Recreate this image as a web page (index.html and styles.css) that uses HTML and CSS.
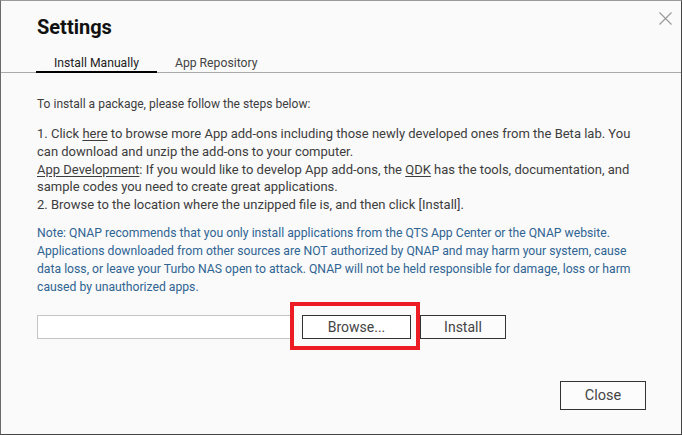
FILE: index.html
```html
<!DOCTYPE html>
<html>
<head>
<meta charset="utf-8">
<link rel="stylesheet" href="styles.css">
</head>
<body>
<div class="dialog">
  <div class="header">
    <h1 class="title">Settings</h1>
    <button class="close-x" aria-label="Close">
      <svg width="13" height="13" viewBox="0 0 13 13"><path d="M0.5 0.5L12.5 12.5M12.5 0.5L0.5 12.5" stroke="#9a9a9a" stroke-width="1.2" fill="none"/></svg>
    </button>
  </div>
  <div class="tabs">
    <div class="tab active">Install Manually</div>
    <div class="tab">App Repository</div>
  </div>
  <div class="content">
    <p class="intro">To install a package, please follow the steps below:</p>
    <p class="steps">1. Click <u>here</u> to browse more App add-ons including those newly developed ones from the Beta lab. You can download and unzip the add-ons to your computer.<br><u>App Development</u>: If you would like to develop App add-ons, the <u>QDK</u> has the tools, documentation, and sample codes you need to create great applications.<br>2. Browse to the location where the unzipped file is, and then click [Install].</p>
    <p class="note">Note: QNAP recommends that you only install applications from the QTS App Center or the QNAP website. Applications downloaded from other sources are NOT authorized by QNAP and may harm your system, cause data loss, or leave your Turbo NAS open to attack. QNAP will not be held responsible for damage, loss or harm caused by unauthorized apps.</p>
    <div class="file-row">
      <div class="file-input"></div>
      <div class="browse-wrap">
        <button class="btn browse">Browse...</button>
        <div class="highlight"></div>
      </div>
      <button class="btn install">Install</button>
    </div>
  </div>
  <div class="footer">
    <button class="btn close">Close</button>
  </div>
</div>
</body>
</html>
```

FILE: styles.css
```css
* { box-sizing: border-box; }
html, body { margin: 0; padding: 0; }
body {
  font-family: Roboto, "Liberation Sans", sans-serif;
  background: #fafafa;
}
.dialog {
  position: relative;
  width: 682px;
  height: 435px;
  background: #fafafa;
  border: 1px solid #444;
  border-top-color: #9a9a9a;
  border-left-color: #6a6a6a;
  display: flex;
  flex-direction: column;
}
.header {
  padding: 14px 36px 0;
}
.title {
  margin: 0;
  font-size: 20px;
  line-height: 24px;
  font-weight: 700;
  color: #111;
}
.close-x {
  position: absolute;
  top: 11px;
  right: 9px;
  width: 13px;
  height: 13px;
  padding: 0;
  border: 0;
  background: none;
  display: block;
}
.close-x svg { display: block; }
.tabs {
  margin-top: 17px;
  padding: 0 35px;
  display: flex;
  border-bottom: 1px solid #aaa;
}
.tab {
  padding: 0 18px;
  font-size: 12.2px;
  line-height: 15px;
  color: #444;
  border-bottom: 2px solid transparent;
  margin-bottom: -1px;
}
.tab.active {
  color: #222;
  border-bottom-color: #000;
}
.content {
  padding: 22px 36px 0;
  font-size: 13px;
  line-height: 18px;
  color: #3d3d3d;
}
.content p { margin: 0; }
.intro { font-size: 12.05px; }
.steps {
  margin-top: 12px !important;
  line-height: 17.75px;
}
.content u { text-underline-offset: 2px; }
.note {
  margin-top: 10px !important;
  font-size: 12.2px;
  color: #2f6493;
}
.file-row {
  margin-top: 19px;
  display: flex;
  align-items: center;
}
.file-input {
  width: 255px;
  height: 24px;
  background: #fff;
  border: 1px solid #c4c4c4;
  margin-right: 10px;
}
.browse-wrap {
  position: relative;
  margin-right: 9px;
}
.btn {
  font-family: Roboto, "Liberation Sans", sans-serif;
  font-size: 14px;
  color: #444;
  background: #fcfcfc;
  border: 1px solid #333;
  border-radius: 0;
  padding: 0;
  display: block;
}
.browse { width: 109px; height: 24px; background: #fff; }
.install { width: 86px; height: 24px; }
.highlight {
  position: absolute;
  top: -13px;
  left: -12px;
  width: 130px;
  height: 48px;
  border: 4px solid #ed1c24;
  pointer-events: none;
}
.footer {
  margin-top: auto;
  padding: 0 35px 24px 0;
  display: flex;
  justify-content: flex-end;
}
.close {
  width: 86px;
  height: 29px;
  font-size: 14.5px;
}
```
